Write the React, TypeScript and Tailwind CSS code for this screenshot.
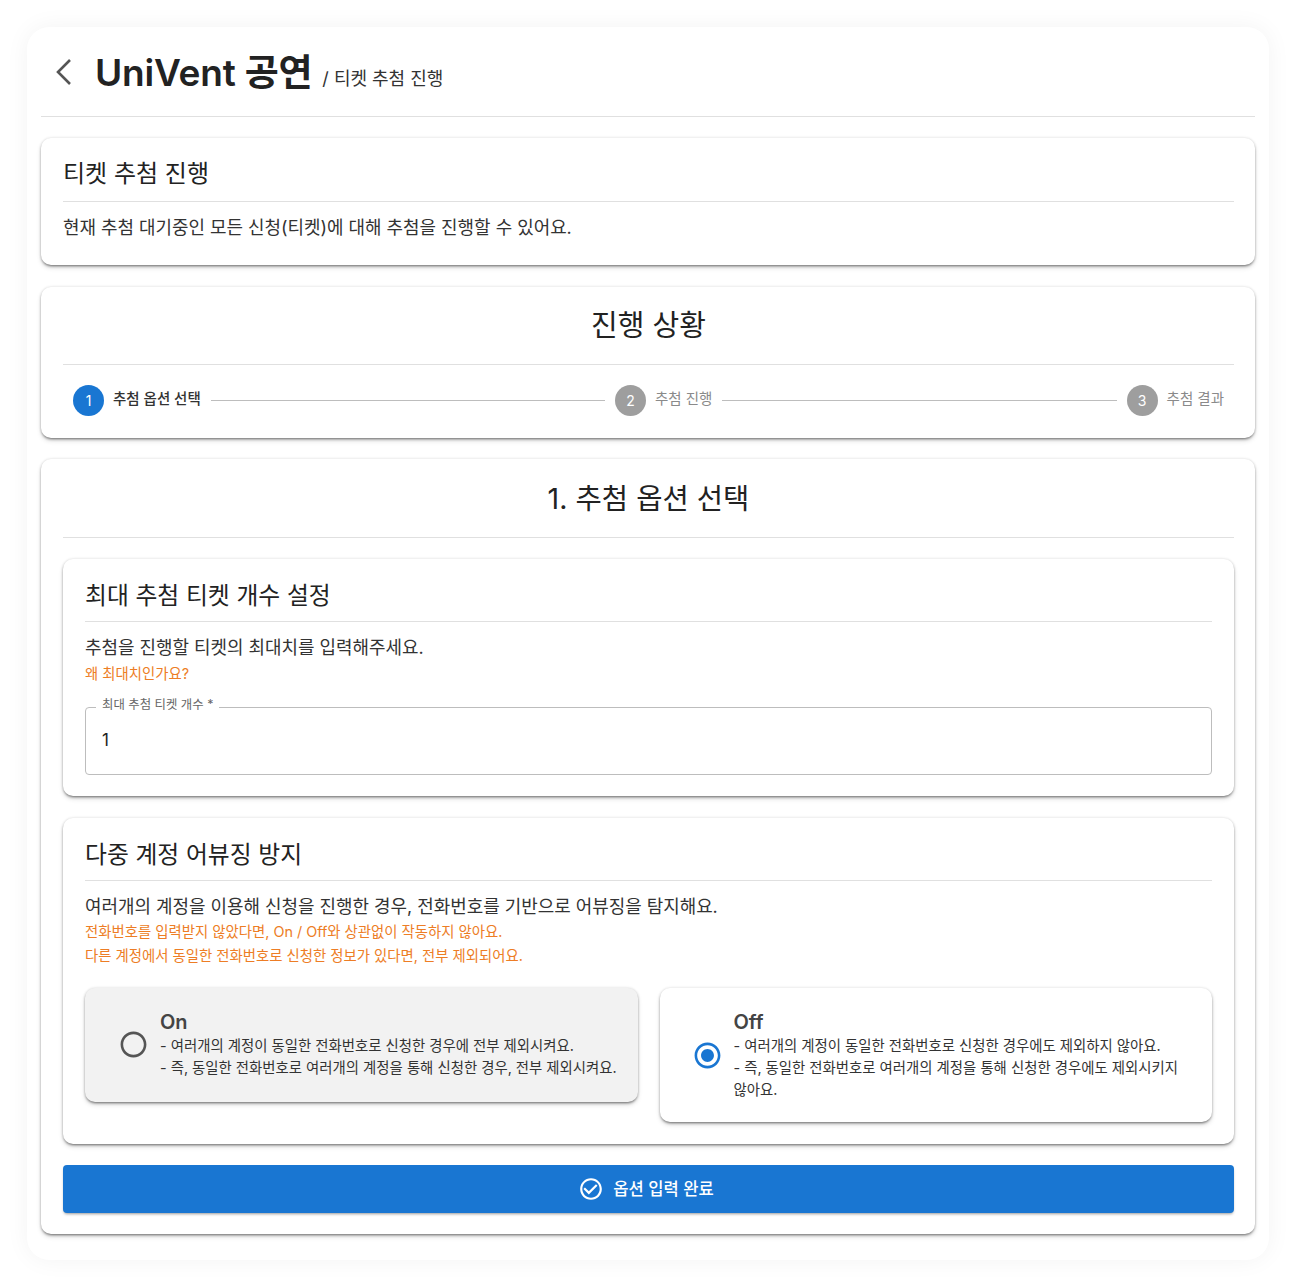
import { MdCheckCircleOutline, MdRadioButtonChecked, MdRadioButtonUnchecked } from "react-icons/md";

const fontStack = "font-['Inter','Noto_Sans_CJK_KR',sans-serif]";
const cardShadow = "shadow-[0_2px_3px_-1px_rgba(0,0,0,0.5),0_3px_5px_rgba(0,0,0,0.12),0_0_3px_rgba(0,0,0,0.14)]";

function Step({ n, label, active }: { n: number; label: string; active?: boolean }) {
  return (
    <div className="flex items-center gap-[9px]">
      <div
        className={
          active
            ? "flex h-[31px] w-[31px] items-center justify-center rounded-full bg-[#1976d2] text-[14px] text-white"
            : "flex h-[31px] w-[31px] items-center justify-center rounded-full bg-[#9e9e9e] text-[14px] text-white"
        }
      >
        {n}
      </div>
      <span
        className={
          active
            ? "pb-[3px] text-[14.5px] leading-5 font-medium text-[#333]"
            : "pb-[3px] text-[14.5px] leading-5 text-[#8a8a8a]"
        }
      >
        {label}
      </span>
    </div>
  );
}

function Connector() {
  return <div className="mx-[10px] h-px flex-1 bg-[#bdbdbd]" />;
}

function Option({
  title,
  lines,
  checked,
}: {
  title: string;
  lines: string[];
  checked?: boolean;
}) {
  return (
    <div
      className={
        checked
          ? `flex min-w-0 items-center self-start rounded-[10px] bg-white pt-[22px] pr-[30px] pb-[22px] pl-[32px] ${cardShadow}`
          : `flex min-w-0 items-center self-start rounded-[10px] bg-[#f2f2f2] pt-[22px] pr-[10px] pb-[24px] pl-[33px] ${cardShadow}`
      }
    >
      <div className="mr-[11px] shrink-0">
        {checked ? (
          <MdRadioButtonChecked className="text-[#1976d2]" size={31} />
        ) : (
          <MdRadioButtonUnchecked className="text-[#555]" size={31} />
        )}
      </div>
      <div className="min-w-0">
        <div className="text-[20px] leading-6 font-semibold text-[#444]">{title}</div>
        <div className="relative top-px">
          {lines.map((line) => (
            <p key={line} className="text-[14.4px] leading-[22px] break-keep text-[#333]">
              {line}
            </p>
          ))}
        </div>
      </div>
    </div>
  );
}

export default function App() {
  return (
    <div className={`h-[1287px] w-[1306px] bg-white p-[27px] text-[#222] ${fontStack}`}>
      <div className="h-[1233px] w-[1242px] rounded-[22px] bg-white px-[14px] shadow-[0_0_24px_rgba(0,0,0,0.05)]">
        <header className="flex h-[90px] items-center border-b border-[#e0e0e0] pl-[14px]">
          <svg width="18" height="28" viewBox="0 0 18 28" fill="none" className="mr-[22px] text-[#555]">
            <polyline points="15,2 3,14 15,26" stroke="currentColor" strokeWidth="2.6" />
          </svg>
          <h1 className="pt-[2px] text-[37px] leading-[44px] font-semibold tracking-[-0.2px] text-[#222]">UniVent 공연</h1>
          <span className="mt-[13px] ml-[10px] text-[18px] text-[#333]">/ 티켓 추첨 진행</span>
        </header>

        <section className={`mt-[21px] h-[127px] rounded-[10px] bg-white pt-[18px] pr-[21px] pl-[22px] ${cardShadow}`}>
          <h2 className="border-b border-[#e0e0e0] pb-[9px] text-[24px] leading-9 text-[#222]">티켓 추첨 진행</h2>
          <p className="mt-[14px] text-[17.93px] leading-6 text-[#333]">
            현재 추첨 대기중인 모든 신청(티켓)에 대해 추첨을 진행할 수 있어요.
          </p>
        </section>

        <section className={`mt-[22px] h-[151px] rounded-[10px] bg-white pt-[19px] pr-[21px] pl-[22px] ${cardShadow}`}>
          <h2 className="border-b border-[#e0e0e0] pb-[18px] text-center text-[29px] leading-10 text-[#222]">진행 상황</h2>
          <div className="mt-[20px] flex items-center px-[10px]">
            <Step n={1} label="추첨 옵션 선택" active />
            <Connector />
            <Step n={2} label="추첨 진행" />
            <Connector />
            <Step n={3} label="추첨 결과" />
          </div>
        </section>

        <section className={`mt-[21px] h-[775px] rounded-[10px] bg-white pt-[19px] pr-[21px] pl-[22px] ${cardShadow}`}>
          <h2 className="border-b border-[#e0e0e0] pb-[17px] text-center text-[28.6px] leading-[42px] text-[#222]">1. 추첨 옵션 선택</h2>

          <div className={`mt-[21px] h-[237px] rounded-[10px] bg-white px-[22px] pt-[19px] ${cardShadow}`}>
            <h3 className="border-b border-[#e0e0e0] pb-[7px] text-[23.8px] leading-9 text-[#222]">최대 추첨 티켓 개수 설정</h3>
            <p className="mt-[14px] text-[17.93px] leading-6 text-[#333]">추첨을 진행할 티켓의 최대치를 입력해주세요.</p>
            <p className="mt-[2px] text-[14.4px] leading-6 text-[#ed7d25]">왜 최대치인가요?</p>
            <fieldset className="mt-[13px] h-[76px] rounded-[4px] border border-[#bdbdbd] px-[10px]">
              <legend className="relative -top-[2px] px-[6px] text-[12.4px] leading-4 text-[#666]">최대 추첨 티켓 개수 *</legend>
              <div className="pt-[13px] pl-[6px] text-[17px] leading-6 text-[#222]">1</div>
            </fieldset>
          </div>

          <div className={`mt-[22px] h-[326px] rounded-[10px] bg-white px-[22px] pt-[19px] ${cardShadow}`}>
            <h3 className="border-b border-[#e0e0e0] pb-[7px] text-[23.8px] leading-9 text-[#222]">다중 계정 어뷰징 방지</h3>
            <p className="mt-[14px] text-[17.93px] leading-6 text-[#333]">
              여러개의 계정을 이용해 신청을 진행한 경우, 전화번호를 기반으로 어뷰징을 탐지해요.
            </p>
            <p className="mt-[1px] text-[14.4px] leading-6 text-[#ed7d25]">전화번호를 입력받지 않았다면, On / Off와 상관없이 작동하지 않아요.</p>
            <p className="text-[14.4px] leading-6 text-[#ed7d25]">다른 계정에서 동일한 전화번호로 신청한 정보가 있다면, 전부 제외되어요.</p>
            <div className="mt-[20px] grid grid-cols-2 gap-[22px]">
              <Option
                title="On"
                lines={[
                  "- 여러개의 계정이 동일한 전화번호로 신청한 경우에 전부 제외시켜요.",
                  "- 즉, 동일한 전화번호로 여러개의 계정을 통해 신청한 경우, 전부 제외시켜요.",
                ]}
              />
              <Option
                title="Off"
                checked
                lines={[
                  "- 여러개의 계정이 동일한 전화번호로 신청한 경우에도 제외하지 않아요.",
                  "- 즉, 동일한 전화번호로 여러개의 계정을 통해 신청한 경우에도 제외시키지 않아요.",
                ]}
              />
            </div>
          </div>

          <button className="mt-[21px] flex h-[48px] w-full items-center justify-center gap-[9px] rounded-[4px] bg-[#1976d2] pr-[5px] text-[16.6px] font-medium text-white shadow-[0_2px_3px_-1px_rgba(0,0,0,0.4)]">
            <MdCheckCircleOutline size={26} />
            옵션 입력 완료
          </button>
        </section>
      </div>
    </div>
  );
}
